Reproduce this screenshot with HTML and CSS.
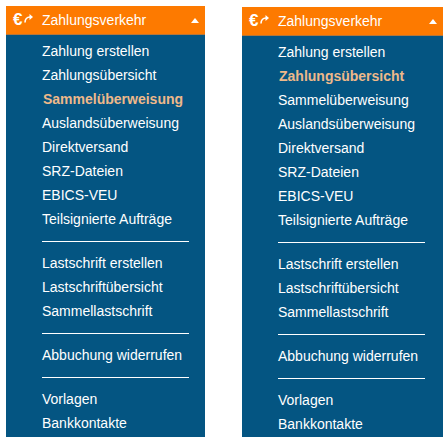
FILE: index.html
```html
<!DOCTYPE html>
<html lang="de">
<head>
<meta charset="utf-8">
<title>Zahlungsverkehr</title>
<link rel="stylesheet" href="styles.css">
</head>
<body>
<div class="page">
  <nav class="panel panel-left">
    <div class="head">
      <span class="euro">€</span>
      <svg class="arrow" viewBox="0 0 9 9"><path d="M1 8.5 C1 5 3 3 6 3" fill="none" stroke="#fff" stroke-width="1.6"/><path d="M5.5 0 L9 3 L5.5 6 Z" fill="#fff"/></svg>
      <span class="title">Zahlungsverkehr</span>
      <span class="caret"></span>
    </div>
    <ul class="list">
      <li>Zahlung erstellen</li>
      <li>Zahlungsübersicht</li>
      <li class="active">Sammelüberweisung</li>
      <li>Auslandsüberweisung</li>
      <li>Direktversand</li>
      <li>SRZ-Dateien</li>
      <li>EBICS-VEU</li>
      <li>Teilsignierte Aufträge</li>
      <li class="sep"></li>
      <li>Lastschrift erstellen</li>
      <li>Lastschriftübersicht</li>
      <li>Sammellastschrift</li>
      <li class="sep"></li>
      <li>Abbuchung widerrufen</li>
      <li class="sep"></li>
      <li>Vorlagen</li>
      <li>Bankkontakte</li>
    </ul>
  </nav>
  <nav class="panel panel-right">
    <div class="head">
      <span class="euro">€</span>
      <svg class="arrow" viewBox="0 0 9 9"><path d="M1 8.5 C1 5 3 3 6 3" fill="none" stroke="#fff" stroke-width="1.6"/><path d="M5.5 0 L9 3 L5.5 6 Z" fill="#fff"/></svg>
      <span class="title">Zahlungsverkehr</span>
      <span class="caret"></span>
    </div>
    <ul class="list">
      <li>Zahlung erstellen</li>
      <li class="active">Zahlungsübersicht</li>
      <li>Sammelüberweisung</li>
      <li>Auslandsüberweisung</li>
      <li>Direktversand</li>
      <li>SRZ-Dateien</li>
      <li>EBICS-VEU</li>
      <li>Teilsignierte Aufträge</li>
      <li class="sep"></li>
      <li>Lastschrift erstellen</li>
      <li>Lastschriftübersicht</li>
      <li>Sammellastschrift</li>
      <li class="sep"></li>
      <li>Abbuchung widerrufen</li>
      <li class="sep"></li>
      <li>Vorlagen</li>
      <li>Bankkontakte</li>
    </ul>
  </nav>
</div>
</body>
</html>
```
FILE: styles.css
```css
html, body {
  margin: 0;
  padding: 0;
  background: #fff;
}
body {
  width: 443px;
  height: 439px;
  overflow: hidden;
  font-family: "Liberation Sans", Arial, sans-serif;
}
.page {
  display: flex;
  align-items: flex-start;
}
.panel {
  background: #045582;
  box-sizing: border-box;
}
.panel-left {
  width: 199px;
  height: 431px;
  margin: 6px 0 0 6px;
}
.panel-right {
  width: 201px;
  height: 430px;
  margin: 7px 0 0 37px;
}
.head {
  display: flex;
  align-items: center;
  height: 29px;
  padding: 0 6px 0 7px;
  background: #fd7a00;
  border-bottom: 1px solid #b5763a;
  box-sizing: border-box;
  color: #fff;
  font-size: 14px;
}
.euro {
  width: 11px;
  font-size: 17px;
  font-weight: bold;
  line-height: 20px;
  flex: none;
}
.arrow {
  width: 9px;
  height: 9px;
  margin: 0 9px 4px 0;
  flex: none;
}
.title {
  flex: 1;
  color: #fff;
}
.caret {
  width: 0;
  height: 0;
  border-left: 4px solid transparent;
  border-right: 4px solid transparent;
  border-bottom: 5px solid #fff;
}
.list {
  list-style: none;
  margin: 0;
  padding: 4px 16px 0 36px;
  font-size: 14px;
  color: #fff;
}
.panel-right .list {
  padding-right: 18px;
}
.list li {
  height: 24px;
  line-height: 24px;
  white-space: nowrap;
}
.list li.active {
  font-weight: bold;
  color: #eeb98a;
  padding-left: 1px;
}
.list li.sep {
  height: 1px;
  background: #fff;
  margin: 10px 0 9px;
}
```
